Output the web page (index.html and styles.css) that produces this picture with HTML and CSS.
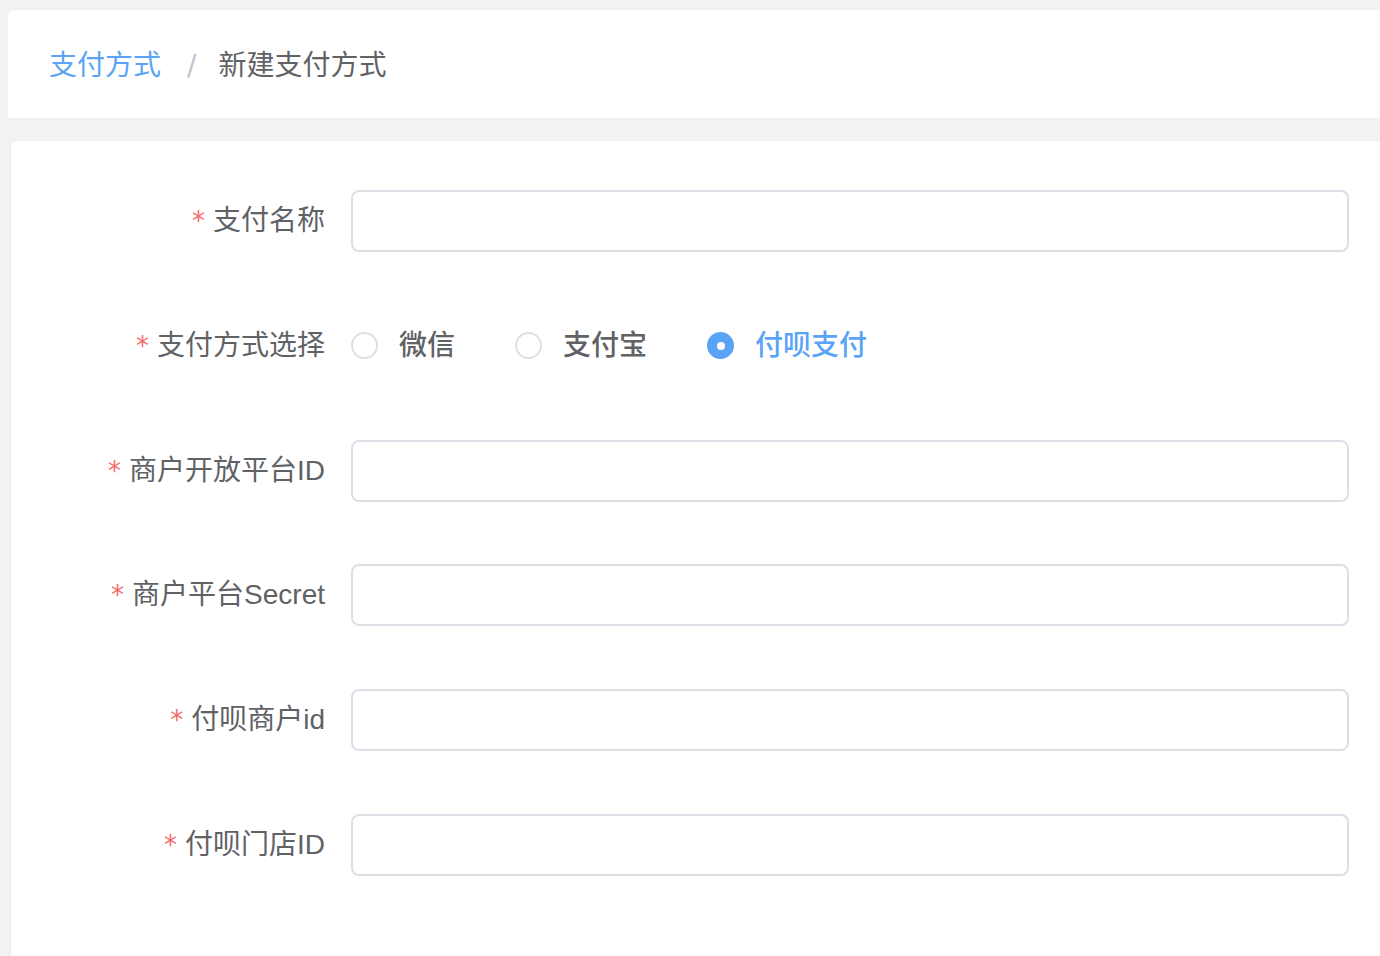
FILE: index.html
```html
<!DOCTYPE html>
<html lang="zh-CN">
<head>
<meta charset="utf-8">
<title>新建支付方式</title>
<link rel="stylesheet" href="styles.css">
</head>
<body>
<div class="page">
  <div class="card crumb-card">
    <nav class="breadcrumb">
      <span class="crumb-link">支付方式</span>
      <span class="crumb-sep">/</span>
      <span class="crumb-current">新建支付方式</span>
    </nav>
  </div>
  <div class="card form-card">
    <form class="form">
      <div class="form-item">
        <label class="form-label"><span class="req">*</span>支付名称</label>
        <div class="form-content"><input class="input" type="text"></div>
      </div>
      <div class="form-item">
        <label class="form-label"><span class="req">*</span>支付方式选择</label>
        <div class="form-content radios">
          <span class="radio"><span class="radio-dot"></span><span class="radio-label">微信</span></span>
          <span class="radio"><span class="radio-dot"></span><span class="radio-label">支付宝</span></span>
          <span class="radio checked"><span class="radio-dot"></span><span class="radio-label">付呗支付</span></span>
        </div>
      </div>
      <div class="form-item">
        <label class="form-label"><span class="req">*</span>商户开放平台ID</label>
        <div class="form-content"><input class="input" type="text"></div>
      </div>
      <div class="form-item">
        <label class="form-label"><span class="req">*</span>商户平台Secret</label>
        <div class="form-content"><input class="input" type="text"></div>
      </div>
      <div class="form-item">
        <label class="form-label"><span class="req">*</span>付呗商户id</label>
        <div class="form-content"><input class="input" type="text"></div>
      </div>
      <div class="form-item">
        <label class="form-label"><span class="req">*</span>付呗门店ID</label>
        <div class="form-content"><input class="input" type="text"></div>
      </div>
    </form>
  </div>
</div>
</body>
</html>
```

FILE: styles.css
```css
html, body {
  margin: 0;
  padding: 0;
  height: 100%;
  overflow: hidden;
}
body {
  background: #f2f2f2;
  font-family: "Liberation Sans", "Noto Sans CJK SC", sans-serif;
  color: #606266;
}
.page {
  padding: 10px 0 0 8px;
  margin-right: -30px;
  display: flex;
  flex-direction: column;
  gap: 22px;
}
.card {
  background: #fff;
  border-radius: 6px 6px 0 0;
}
.crumb-card {
  height: 108px;
  display: flex;
  align-items: center;
  padding-left: 41px;
  padding-top: 3px;
  box-sizing: border-box;
}
.breadcrumb {
  display: flex;
  align-items: center;
  font-size: 28px;
  line-height: 40px;
}
.crumb-link {
  color: #5aa4f7;
}
.crumb-sep {
  color: #c0c4cc;
  font-family: "DejaVu Sans", sans-serif;
  font-weight: normal;
  font-size: 28px;
  margin: 0 22px 0 26px;
}
.crumb-current {
  color: #606266;
}
.form-card {
  margin-left: 2px;
  border: 1px solid #ebeef5;
  border-right: none;
  padding: 49px 61px 80px 0;
  min-height: 900px;
}
.form {
  display: flex;
  flex-direction: column;
}
.form-item {
  display: flex;
  height: 62px;
  margin-bottom: 62.8px;
}
.form-label {
  width: 340px;
  box-sizing: border-box;
  padding-right: 26px;
  text-align: right;
  font-size: 28px;
  line-height: 62px;
  color: #606266;
  flex-shrink: 0;
}
.req {
  color: #f56c6c;
  margin-right: 8px;
  font-family: "DejaVu Sans", sans-serif;
  font-size: 26px;
}
.form-content {
  flex: 1;
  display: flex;
  align-items: center;
}
.input {
  width: 100%;
  height: 62px;
  box-sizing: border-box;
  border: 2px solid #dcdfe6;
  border-radius: 8px;
  background: #fff;
  outline: none;
  padding: 0 24px;
  font-size: 28px;
}
.radios {
  gap: 60px;
}
.radio {
  display: flex;
  align-items: center;
  gap: 21px;
}
.radio-dot {
  width: 27px;
  height: 27px;
  box-sizing: border-box;
  border: 2px solid #dcdfe6;
  border-radius: 50%;
  background: #fff;
  position: relative;
}
.radio.checked .radio-dot {
  border-color: #5aa4f7;
  background: #5aa4f7;
}
.radio.checked .radio-dot::after {
  content: "";
  position: absolute;
  width: 8px;
  height: 8px;
  border-radius: 50%;
  background: #fff;
  left: 50%;
  top: 50%;
  transform: translate(-50%, -50%);
}
.radio-label {
  font-size: 28px;
  font-weight: 500;
  color: #606266;
  line-height: 40px;
}
.radio.checked .radio-label {
  color: #5aa4f7;
}
```
